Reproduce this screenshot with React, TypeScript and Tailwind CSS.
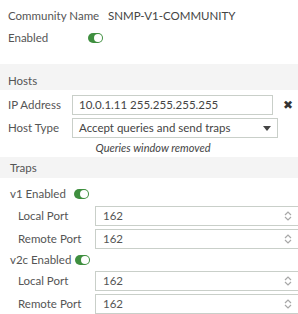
import React from "react";

function Toggle() {
  return (
    <span className="inline-flex items-center w-[15px] h-[10px] rounded-full bg-[#3f8f3f] px-[1px] justify-end">
      <span className="w-[8px] h-[8px] rounded-full bg-white" />
    </span>
  );
}

function Spinner() {
  return (
    <svg width="8" height="12" viewBox="0 0 8 12" className="shrink-0">
      <path d="M1 5 L4 2 L7 5" fill="none" stroke="#a8a8a8" strokeWidth="1.2" />
      <path d="M1 7 L4 10 L7 7" fill="none" stroke="#a8a8a8" strokeWidth="1.2" />
    </svg>
  );
}

function PortRow({ label, first }: { label: string; first?: boolean }) {
  return (
    <div className={first ? "flex items-center h-[20px] mt-[4px]" : "flex items-center h-[20px] mt-[3px]"}>
      <span className="w-[95px] pl-[18px] shrink-0 whitespace-nowrap">{label}</span>
      <div className="flex-1 h-[20px] border border-[#c9cfc9] flex items-center pl-[7px] pr-[9px] mr-[-4px]">
        <span className="flex-1">162</span>
        <Spinner />
      </div>
    </div>
  );
}

export default function App() {
  return (
    <div
      className="w-[298px] h-[314px] bg-white text-[#555] text-[11.5px] leading-[16px] overflow-hidden whitespace-nowrap"
      style={{ fontFamily: "Lato, 'Open Sans', sans-serif" }}
    >
      <div className="flex items-center pt-[8px] pl-[8px]">
        <span className="w-[100px]">Community Name</span>
        <span className="text-[#444]">SNMP-V1-COMMUNITY</span>
      </div>
      <div className="flex items-center mt-[6px] pl-[8px]">
        <span className="w-[80px]">Enabled</span>
        <Toggle />
      </div>

      <div className="mt-[18px] h-[26px] bg-[#f4f4f4] flex items-end pl-[8px] pb-[1px]">
        Hosts
      </div>

      <div className="flex items-center mt-[5px] pl-[8px]">
        <span className="w-[64px] shrink-0">IP Address</span>
        <div className="w-[206px] h-[20px] border border-[#c9cfc9] flex items-center pl-[6px] text-[#444]">
          10.0.1.11 255.255.255.255
        </div>
        <div className="ml-[5px] w-[20px] h-[20px] flex items-center justify-center text-[#333] text-[12px]">
          ✖
        </div>
      </div>
      <div className="flex items-center mt-[3px] pl-[8px]">
        <span className="w-[64px] shrink-0">Host Type</span>
        <div className="w-[206px] h-[20px] border border-[#c9cfc9] flex items-center pl-[6px] pr-[6px] text-[#444]">
          <span className="flex-1">Accept queries and send traps</span>
          <svg width="8" height="5" viewBox="0 0 8 5">
            <path d="M0 0 L8 0 L4 5 Z" fill="#444" />
          </svg>
        </div>
      </div>
      <div className="text-center italic text-[11px] mt-[2px] pl-[8px] text-[#444]">
        Queries window removed
      </div>

      <div className="mt-[1px] h-[21px] bg-[#f4f4f4] flex items-center pl-[10px]">
        Traps
      </div>

      <div className="flex items-center mt-[8px] pl-[10px] gap-[8px]">
        <span>v1 Enabled</span>
        <Toggle />
      </div>
      <PortRow label="Local Port" first />
      <PortRow label="Remote Port" />

      <div className="flex items-center mt-[3px] pl-[10px] gap-[4px]">
        <span>v2c Enabled</span>
        <Toggle />
      </div>
      <PortRow label="Local Port" />
      <PortRow label="Remote Port" />
    </div>
  );
}
